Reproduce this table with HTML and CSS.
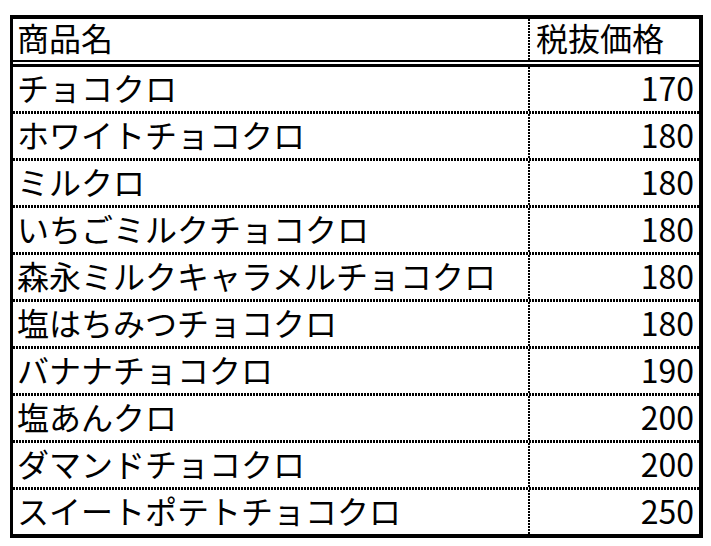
FILE: index.html
```html
<!DOCTYPE html>
<html lang="ja">
<head>
<meta charset="utf-8">
<title>チョコクロ 価格表</title>
<link rel="stylesheet" href="styles.css">
</head>
<body>
<div class="sheet">
  <div class="row head">
    <div class="cell name">商品名</div>
    <div class="cell price head-price">税抜価格</div>
  </div>
  <div class="rows">
    <div class="row"><div class="cell name">チョコクロ</div><div class="cell price">170</div></div>
    <div class="row"><div class="cell name">ホワイトチョコクロ</div><div class="cell price">180</div></div>
    <div class="row"><div class="cell name">ミルクロ</div><div class="cell price">180</div></div>
    <div class="row"><div class="cell name">いちごミルクチョコクロ</div><div class="cell price">180</div></div>
    <div class="row"><div class="cell name">森永ミルクキャラメルチョコクロ</div><div class="cell price">180</div></div>
    <div class="row"><div class="cell name">塩はちみつチョコクロ</div><div class="cell price">180</div></div>
    <div class="row"><div class="cell name">バナナチョコクロ</div><div class="cell price">190</div></div>
    <div class="row"><div class="cell name">塩あんクロ</div><div class="cell price">200</div></div>
    <div class="row"><div class="cell name">ダマンドチョコクロ</div><div class="cell price">200</div></div>
    <div class="row"><div class="cell name">スイートポテトチョコクロ</div><div class="cell price">250</div></div>
  </div>
</div>
</body>
</html>
```
FILE: styles.css
```css
html, body {
  margin: 0;
  padding: 0;
  background: #fff;
}

.sheet {
  margin: 15px 0 0 10px;
  width: 693px;
  box-sizing: border-box;
  border-style: solid;
  border-color: #000;
  border-width: 4px 4px 4px 3px;
  font-family: "Noto Sans CJK JP", "Noto Sans", sans-serif;
  font-size: 32px;
  color: #000;
}

.row {
  display: grid;
  grid-template-columns: 517px 1fr;
  height: 47px;
  box-sizing: border-box;
  padding-bottom: 3px;
  background-image: linear-gradient(to right, #000 2px, #fff 2px);
  background-size: 3px 3px;
  background-position: left bottom;
  background-repeat: repeat-x;
}

.rows {
  border-top: 3px solid #000;
}

.rows .row:last-child {
  height: 44px;
  padding-bottom: 0;
  background: none;
}

.head {
  height: 43px;
  padding-bottom: 0;
  margin-bottom: 2px;
  background: none;
  border-bottom: 2px solid #000;
}

.cell {
  display: flex;
  align-items: center;
  line-height: 1;
  white-space: nowrap;
  padding-bottom: 5px;
  box-sizing: border-box;
}

.name {
  padding-left: 4px;
  background-image: linear-gradient(to bottom, #000 2px, #fff 2px);
  background-size: 2px 3px;
  background-position: right top;
  background-repeat: repeat-y;
}

.price {
  justify-content: flex-end;
  padding-right: 5px;
}

.head-price {
  justify-content: flex-start;
  padding-left: 6px;
}
```
